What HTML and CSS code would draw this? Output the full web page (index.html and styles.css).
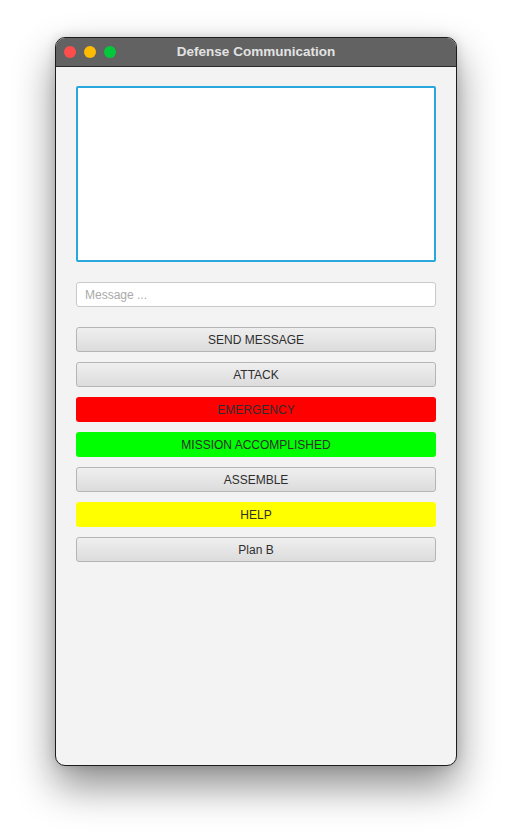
FILE: index.html
```html
<!DOCTYPE html>
<html>
<head>
<meta charset="utf-8">
<link rel="stylesheet" href="styles.css">
</head>
<body>
<div class="window">
  <div class="titlebar">
    <div class="lights">
      <span class="light red"></span>
      <span class="light yellow"></span>
      <span class="light green"></span>
    </div>
    <div class="title">Defense Communication</div>
  </div>
  <div class="content">
    <div class="log"></div>
    <div class="field">Message ...</div>
    <div class="buttons">
      <div class="btn">SEND MESSAGE</div>
      <div class="btn">ATTACK</div>
      <div class="btn flat red-bg">EMERGENCY</div>
      <div class="btn flat green-bg">MISSION ACCOMPLISHED</div>
      <div class="btn">ASSEMBLE</div>
      <div class="btn flat yellow-bg">HELP</div>
      <div class="btn">Plan B</div>
    </div>
  </div>
</div>
</body>
</html>
```
FILE: styles.css
```css
html, body {
  margin: 0;
  padding: 0;
  background: #ffffff;
}
body {
  width: 512px;
  height: 840px;
  overflow: hidden;
  font-family: "Liberation Sans", Arial, sans-serif;
}
.window {
  margin: 37px 0 0 55px;
  width: 402px;
  height: 729px;
  box-sizing: border-box;
  border: 1px solid #1c1c1c;
  border-radius: 10px;
  background: #f3f3f3;
  box-shadow: 0 20px 40px rgba(0, 0, 0, 0.45), 0 0 12px rgba(0, 0, 0, 0.15);
  overflow: hidden;
  display: flex;
  flex-direction: column;
}
.titlebar {
  height: 28px;
  background: #626262;
  border-bottom: 1px solid #2a2a2a;
  display: flex;
  align-items: center;
  position: relative;
  flex: none;
}
.lights {
  display: flex;
  gap: 8px;
  padding-left: 8px;
}
.light {
  width: 12px;
  height: 12px;
  border-radius: 50%;
  display: block;
}
.light.red { background: #fe4d4d; }
.light.yellow { background: #febb04; }
.light.green { background: #03c93a; }
.title {
  position: absolute;
  left: 0;
  right: 0;
  text-align: center;
  color: #e2e2e2;
  font-weight: bold;
  font-size: 13.5px;
  top: 6px;
}
.content {
  padding: 19px 20px 0 20px;
  display: flex;
  flex-direction: column;
}
.log {
  height: 176px;
  box-sizing: border-box;
  background: #ffffff;
  border: 2px solid #2aa7dc;
  border-radius: 2px;
}
.field {
  margin-top: 20px;
  height: 25px;
  box-sizing: border-box;
  border: 1px solid #c9c9c9;
  border-radius: 3px;
  background: #ffffff;
  color: #a9a9a9;
  font-size: 12px;
  line-height: 24px;
  padding-left: 8px;
}
.buttons {
  margin-top: 20px;
  display: flex;
  flex-direction: column;
  gap: 10px;
}
.btn {
  height: 25px;
  box-sizing: border-box;
  border: 1px solid #b5b5b5;
  border-radius: 3px;
  background: linear-gradient(#efefef, #dcdcdc);
  color: #2e2e2e;
  font-size: 12px;
  line-height: 24px;
  text-align: center;
}
.btn.flat {
  border: none;
  line-height: 26px;
}
.red-bg { background: #ff0000; }
.green-bg { background: #00ff00; }
.yellow-bg { background: #ffff00; }
```
